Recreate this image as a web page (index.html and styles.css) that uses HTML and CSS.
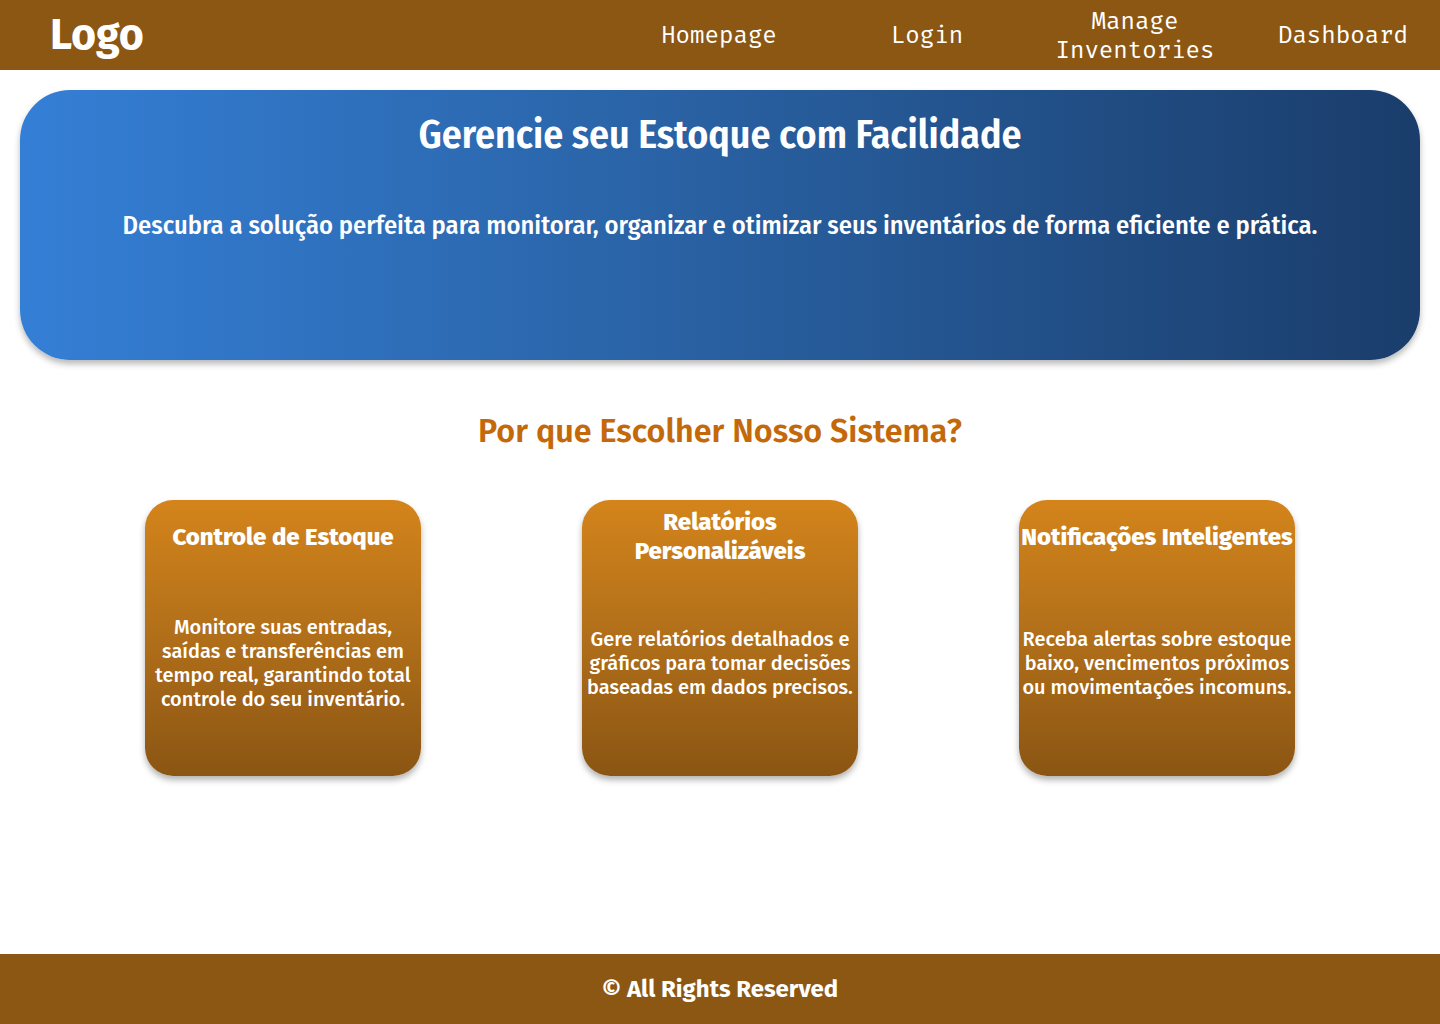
FILE: index.html
```html
<!DOCTYPE html>
<html lang="pt">
<head>
<meta charset="utf-8">
<title>Estoque</title>
<link rel="stylesheet" href="styles.css">
</head>
<body>
<header class="topbar">
  <div class="logo">Logo</div>
  <nav class="nav">
    <a class="nav-item" href="#">Homepage</a>
    <a class="nav-item" href="#">Login</a>
    <a class="nav-item" href="#">Manage Inventories</a>
    <a class="nav-item" href="#">Dashboard</a>
  </nav>
</header>
<main class="main">
  <section class="hero">
    <h1 class="hero-title">Gerencie seu Estoque com Facilidade</h1>
    <p class="hero-text">Descubra a solução perfeita para monitorar, organizar e otimizar seus inventários de forma eficiente e prática.</p>
  </section>
  <section class="features">
    <h2 class="features-title">Por que Escolher Nosso Sistema?</h2>
    <div class="cards">
      <div class="card">
        <h3 class="card-title">Controle de Estoque</h3>
        <p class="card-text">Monitore suas entradas, saídas e transferências em tempo real, garantindo total controle do seu inventário.</p>
      </div>
      <div class="card">
        <h3 class="card-title">Relatórios Personalizáveis</h3>
        <p class="card-text">Gere relatórios detalhados e gráficos para tomar decisões baseadas em dados precisos.</p>
      </div>
      <div class="card">
        <h3 class="card-title">Notificações Inteligentes</h3>
        <p class="card-text">Receba alertas sobre estoque baixo, vencimentos próximos ou movimentações incomuns.</p>
      </div>
    </div>
  </section>
</main>
<footer class="footer">© All Rights Reserved</footer>
</body>
</html>
```
FILE: styles.css
```css
* { box-sizing: border-box; }
html, body { margin: 0; padding: 0; }
body {
  font-family: "Fira Sans", "Open Sans", "Noto Sans", sans-serif;
  background: #ffffff;
  min-height: 1024px;
  display: flex;
  flex-direction: column;
}
.topbar {
  height: 70px;
  background: #8b5713;
  display: flex;
  align-items: center;
  justify-content: space-between;
  padding: 0 17px 0 50px;
}
.logo {
  color: #ffffff;
  font-family: "Fira Sans", "Open Sans", sans-serif;
  font-weight: 700;
  font-size: 43px;
  line-height: 1;
  margin-top: -2px;
}
.nav {
  display: flex;
  gap: 48px;
  align-items: center;
  padding-top: 1px;
}
.nav-item {
  width: 160px;
  text-align: center;
  color: #ffffff;
  text-decoration: none;
  font-family: "Fira Code", "Fira Mono", "DejaVu Sans Mono", "Liberation Mono", monospace;
  font-size: 23.5px;
  line-height: 29px;
}
.main { flex: 1; padding: 20px 20px 0; }
.hero {
  height: 270px;
  border-radius: 50px;
  background: linear-gradient(90deg, #347fd6 0%, #2a63a6 45%, #1a3d6b 100%);
  box-shadow: 0 4px 6px rgba(0, 0, 0, 0.28);
  color: #ffffff;
  text-align: center;
  padding-top: 22px;
}
.hero-title {
  margin: 0;
  font-family: "Fira Sans Condensed", "Fira Sans", "Open Sans", sans-serif;
  font-weight: 600;
  font-size: 39.7px;
  line-height: 46px;
}
.hero-text {
  margin: 51px 0 0;
  font-family: "Fira Sans Condensed", "Fira Sans", "Open Sans", sans-serif;
  font-weight: 500;
  font-size: 26.4px;
  line-height: 32px;
}
.features { text-align: center; padding-top: 52px; }
.features-title {
  margin: 0;
  color: #c4690a;
  font-weight: 600;
  font-size: 32.3px;
  line-height: 40px;
}
.cards {
  display: flex;
  justify-content: center;
  gap: 161px;
  margin-top: 48px;
}
.card {
  width: 276px;
  height: 276px;
  border-radius: 28px;
  background: linear-gradient(180deg, #d4841a 0%, #b4711a 45%, #8a5513 100%);
  box-shadow: 0 4px 6px rgba(0, 0, 0, 0.3);
  color: #ffffff;
  display: grid;
  grid-template-rows: 74px 1fr;
  padding: 0 0 24px;
}
.card-title {
  margin: 0;
  align-self: center;
  font-weight: 800;
  font-size: 24px;
  line-height: 29px;
}
.card-text {
  margin: 0;
  align-self: center;
  padding: 0;
  font-weight: 500;
  font-size: 20px;
  line-height: 24px;
}
.footer {
  height: 70px;
  background: #8b5713;
  color: #ffffff;
  display: flex;
  align-items: center;
  justify-content: center;
  font-weight: 700;
  font-size: 24px;
}
```
